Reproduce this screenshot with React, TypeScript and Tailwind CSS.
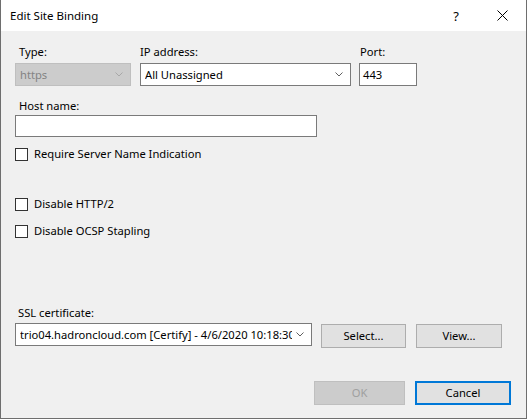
import React from "react";

const Chevron = ({ color = "#5f5f5f" }: { color?: string }) => (
  <svg width="8" height="5" viewBox="0 0 8 5" fill="none">
    <path d="M0.5 0.5 L4 4 L7.5 0.5" stroke={color} strokeWidth="1" />
  </svg>
);

const Combo = ({
  value,
  width,
  disabled = false,
}: {
  value: string;
  width: string;
  disabled?: boolean;
}) => (
  <div
    className={`flex h-[23px] items-center border pl-[4px] pr-[7px] ${width} ${
      disabled ? "border-[#bfbfbf] bg-[#cccccc] text-[#838383]" : "border-[#7a7a7a] bg-white text-black"
    }`}
  >
    <span className="flex-1 overflow-hidden whitespace-nowrap">{value}</span>
    <span className="ml-[4px] flex items-center">
      <Chevron color={disabled ? "#a8a8a8" : "#5f5f5f"} />
    </span>
  </div>
);

const Check = ({ label }: { label: string }) => (
  <label className="flex h-[16px] items-center">
    <span className="h-[13px] w-[13px] border border-[#333333] bg-white" />
    <span className="ml-[6px]">{label}</span>
  </label>
);

const Button = ({
  label,
  width,
  state = "normal",
}: {
  label: string;
  width: string;
  state?: "normal" | "disabled" | "default";
}) => {
  const look =
    state === "disabled"
      ? "border border-[#bfbfbf] bg-[#cccccc] text-[#a0a0a0]"
      : state === "default"
      ? "border-2 border-[#0078d7] bg-[#e1e1e1] text-black"
      : "border border-[#adadad] bg-[#e1e1e1] text-black";
  return (
    <button className={`flex h-[24px] items-center justify-center ${width} ${look}`}>
      {label}
    </button>
  );
};

export default function App() {
  return (
    <div
      className="flex h-[419px] w-[527px] flex-col border-x border-b border-[#6e6e6e] text-[11.2px] leading-[16px] text-black"
      style={{ fontFamily: '"Noto Sans", sans-serif' }}
    >
      {/* title bar */}
      <div className="flex h-[31px] items-center bg-white pl-[9px]">
        <span className="flex-1 text-[11.5px]">Edit Site Binding</span>
        <span className="mr-[38px] text-[13px]">?</span>
        <svg width="11" height="11" viewBox="0 0 11 11" className="mr-[18px]">
          <path d="M0.5 0.5 L10.5 10.5 M10.5 0.5 L0.5 10.5" stroke="#000" strokeWidth="1" />
        </svg>
      </div>

      {/* body */}
      <div className="flex flex-1 flex-col bg-[#f0f0f0] pl-[14px]">
        <div className="mt-[13px] flex items-start">
          <div className="w-[116px]">
            <div className="pl-[4px]">Type:</div>
            <div className="mt-[3px]">
              <Combo value="https" width="w-[116px]" disabled />
            </div>
          </div>
          <div className="ml-[9px]">
            <div>IP address:</div>
            <div className="mt-[3px]">
              <Combo value="All Unassigned" width="w-[211px]" />
            </div>
          </div>
          <div className="ml-[8px]">
            <div className="pl-[1px]">Port:</div>
            <div className="mt-[3px] flex h-[23px] w-[58px] items-center border border-[#7a7a7a] bg-white pl-[3px]">
              443
            </div>
          </div>
        </div>

        <div className="mt-[12px] pl-[4px]">Host name:</div>
        <div className="mt-[1px] h-[22px] w-[302px] border border-[#7a7a7a] bg-white" />

        <div className="mt-[9px]">
          <Check label="Require Server Name Indication" />
        </div>
        <div className="mt-[34px]">
          <Check label="Disable HTTP/2" />
        </div>
        <div className="mt-[11px]">
          <Check label="Disable OCSP Stapling" />
        </div>

        <div className="mt-[66px] pl-[3px]">SSL certificate:</div>
        <div className="mt-[2px] flex items-start">
          <Combo value="trio04.hadroncloud.com [Certify] - 4/6/2020 10:18:30 AM" width="w-[297px]" />
          <div className="ml-[9px] mt-[1px]">
            <Button label="Select..." width="w-[85px]" />
          </div>
          <div className="ml-[10px] mt-[1px]">
            <Button label="View..." width="w-[86px]" />
          </div>
        </div>

        <div className="mt-[33px] flex justify-end pr-[15px]">
          <Button label="OK" width="w-[91px]" state="disabled" />
          <div className="ml-[10px]">
            <Button label="Cancel" width="w-[96px]" state="default" />
          </div>
        </div>
      </div>
    </div>
  );
}
